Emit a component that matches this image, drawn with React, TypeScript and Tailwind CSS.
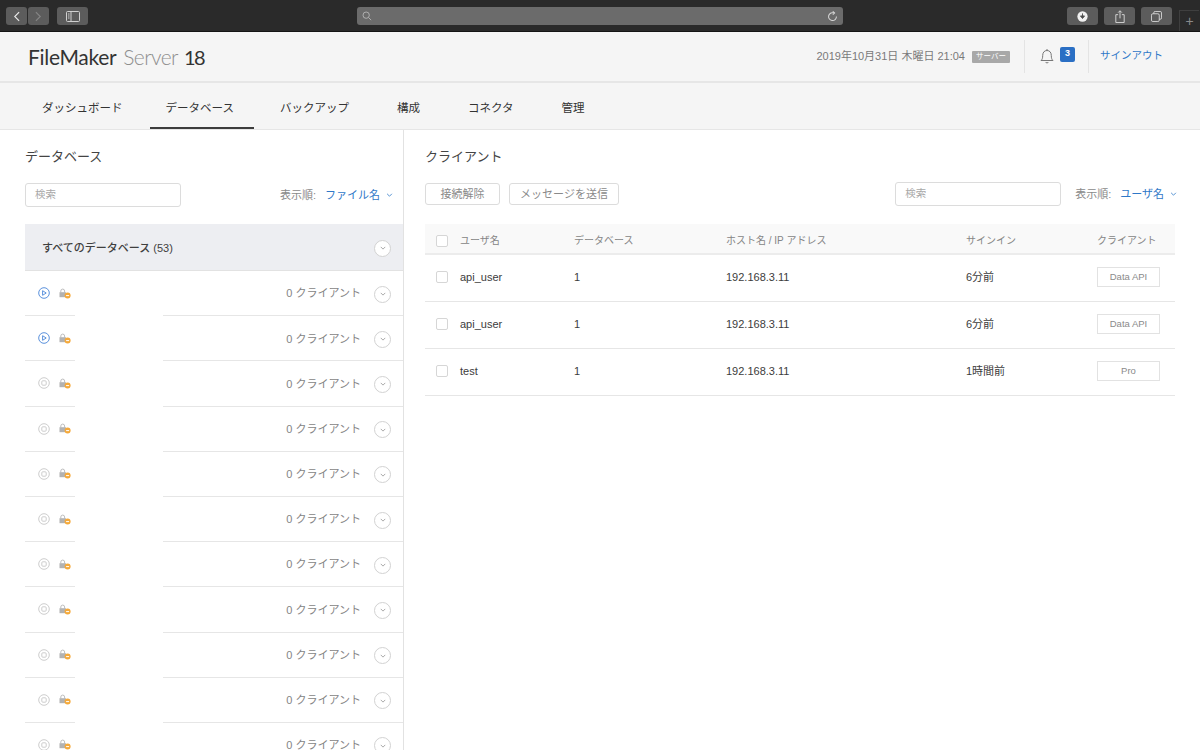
import React from "react";

const jp = "font-['Liberation_Sans','Noto_Sans_CJK_JP',sans-serif]";

function Chevron({ className = "" }: { className?: string }) {
  return (
    <svg viewBox="0 0 8 5" className={className} fill="none" stroke="currentColor" strokeWidth="1">
      <path d="M1 1l3 3 3-3" />
    </svg>
  );
}

function RoundChevron({ white = false }: { white?: boolean }) {
  return (
    <span className={`flex h-[17px] w-[17px] items-center justify-center rounded-full border border-[#d2d2d2] text-[#8c8c8c] ${white ? "bg-white" : ""}`}>
      <Chevron className="h-[4px] w-[6px]" />
    </span>
  );
}

function PlayIcon() {
  return (
    <svg viewBox="0 0 12 12" className="h-3 w-3" fill="none" stroke="#4a86d8" strokeWidth="0.9">
      <circle cx="6" cy="6" r="5.3" />
      <path d="M4.600 3.700v4.600l3.600-2.300z" />
    </svg>
  );
}

function StopIcon() {
  return (
    <svg viewBox="0 0 12 12" className="h-3 w-3" fill="none" stroke="#cdcdcd" strokeWidth="1">
      <circle cx="6" cy="6" r="5.3" />
      <rect x="3.800" y="3.800" width="4.400" height="4.400" rx="1" />
    </svg>
  );
}

function LockIcon() {
  return (
    <svg viewBox="0 0 12 11" className="h-[11px] w-[12px]">
      <path d="M1.800 4.500V3a1.900 1.900 0 0 1 3.800 0v1.500" fill="none" stroke="#bdbdbd" strokeWidth="1" />
      <rect x="0.500" y="4.200" width="6.400" height="5" fill="#b2b2b2" />
      <circle cx="8.600" cy="7.600" r="3" fill="#f5a93a" />
      <rect x="7.100" y="7.100" width="3" height="1" fill="#fff" />
    </svg>
  );
}

function DbRow({ playing }: { playing?: boolean }) {
  return (
    <div className="flex h-[45.2px] shrink-0">
      <div className="flex w-[50px] items-center gap-[9px] border-b border-[#e6e6e6] pl-[13px]">
        {playing ? <PlayIcon /> : <StopIcon />}
        <LockIcon />
      </div>
      <div className="w-[88px]" />
      <div className="flex flex-1 items-center justify-end border-b border-[#e6e6e6] pr-[12px] pt-[2px]">
        <span className="mb-[1px] mr-[13px] text-[11px] text-[#858585]">0 クライアント</span>
        <RoundChevron />
      </div>
    </div>
  );
}

function Badge({ label }: { label: string }) {
  return (
    <span className="flex h-[20px] w-[63px] items-center justify-center border border-[#e2e2e2] text-[9.5px] text-[#8a8a8a]">{label}</span>
  );
}

function Check() {
  return <span className="h-3 w-3 shrink-0 rounded-[2px] border border-[#d6d6d6] bg-white" />;
}

function ClientRow({ user, time, type }: { user: string; time: string; type: string }) {
  return (
    <div className="flex h-[47px] items-center border-b border-[#e6e6e6] pb-[2px] text-[11px] text-[#3c3c3c]">
      <div className="flex w-[149px] items-center gap-3 pl-[11px]">
        <Check />
        <span>{user}</span>
      </div>
      <div className="w-[152px]">1</div>
      <div className="w-[240px]">192.168.3.11</div>
      <div className="w-[131px]">{time}</div>
      <Badge label={type} />
    </div>
  );
}

function Search({ w }: { w: string }) {
  return (
    <div className={`flex h-6 items-center rounded-[3px] border border-[#dcdcdc] bg-white pl-[9px] text-[10.5px] text-[#a8a8a8] ${w}`}>検索</div>
  );
}

function Sort({ label }: { label: string }) {
  return (
    <div className="flex items-center text-[11px]">
      <span className="text-[#8a8a8a]">表示順:</span>
      <span className="ml-[9px] text-[#2f78c8]">{label}</span>
      <Chevron className="ml-[6px] h-[4px] w-[7px] text-[#2f78c8]" />
    </div>
  );
}

function ChromeBtn({ w, children }: { w: string; children?: React.ReactNode }) {
  return <div className={`flex h-[18px] items-center justify-center rounded-[3px] bg-[#5c5c5c] ${w}`}>{children}</div>;
}

export default function App() {
  return (
    <div className={`flex h-[750px] w-[1200px] flex-col overflow-hidden bg-white ${jp}`}>
      {/* browser chrome */}
      <div className="flex h-8 shrink-0 items-start border-b border-[#151515] bg-[#2a2a2a] pt-[7px]">
        <div className="ml-[6px] flex gap-[1px]">
          <ChromeBtn w="w-[21px]">
            <svg viewBox="0 0 8 12" className="h-[11px] w-[7px]" fill="none" stroke="#e8e8e8" strokeWidth="1.3"><path d="M7 1L2 6l5 5" /></svg>
          </ChromeBtn>
          <ChromeBtn w="w-[21px]">
            <svg viewBox="0 0 8 12" className="h-[11px] w-[7px]" fill="none" stroke="#858585" strokeWidth="1.3"><path d="M1 1l5 5-5 5" /></svg>
          </ChromeBtn>
        </div>
        <div className="ml-[8px]">
          <ChromeBtn w="w-[31px]">
            <svg viewBox="0 0 14 11" className="h-[11px] w-[14px]" fill="none" stroke="#d0d0d0" strokeWidth="1"><rect x="0.5" y="0.5" width="13" height="10" rx="1" /><path d="M5 1v9M2 3h1.500M2 5h1.500M2 7h1.500" /></svg>
          </ChromeBtn>
        </div>
        <div className="ml-[269px] flex h-[18px] w-[486px] items-center justify-between rounded-[3px] bg-[#6b6b6b] px-[5px]">
          <svg viewBox="0 0 12 12" className="h-[10px] w-[10px]" fill="none" stroke="#b5b5b5" strokeWidth="1.1"><circle cx="5" cy="5" r="3.800" /><path d="M8 8l3 3" /></svg>
          <svg viewBox="0 0 12 12" className="h-[11px] w-[11px]" fill="none" stroke="#d8d8d8" strokeWidth="1.1"><path d="M7.800 2.200A4.300 4.300 0 1 0 10.300 6" /><path d="M6.300 0.400l2 1.800-2 1.700" /></svg>
        </div>
        <div className="ml-[224px] flex gap-[6px]">
          <ChromeBtn w="w-[31px]">
            <svg viewBox="0 0 12 12" className="h-[11px] w-[11px]"><circle cx="6" cy="6" r="5.600" fill="#f0f0f0" /><path d="M6 2.600v4.400M3.800 5.400L6 8.200l2.200-2.800z" stroke="#4a4a4a" fill="#4a4a4a" strokeWidth="1" /></svg>
          </ChromeBtn>
          <ChromeBtn w="w-[31px]">
            <svg viewBox="0 0 10 14" className="h-[13px] w-[10px]" fill="none" stroke="#d8d8d8" strokeWidth="1"><path d="M3 5H.5v8.500h9V5H7M5 9V1M3 2.800L5 .8l2 2" /></svg>
          </ChromeBtn>
          <ChromeBtn w="w-[31px]">
            <svg viewBox="0 0 12 12" className="h-[11px] w-[11px]" fill="none" stroke="#d8d8d8" strokeWidth="1"><rect x="0.5" y="3" width="8.500" height="8.500" rx="1.500" /><path d="M3 3V2A1.500 1.500 0 0 1 4.500.5h5.500A1.500 1.500 0 0 1 11.500 2v5.500A1.500 1.500 0 0 1 10 9H9" /></svg>
          </ChromeBtn>
        </div>
        <div className="ml-[7px] mt-[3px] flex h-[21px] w-[20px] items-center justify-center border-l border-t border-[#3f3f3f] text-[14px] font-light leading-none text-[#8a8a8a]">+</div>
      </div>

      {/* app header */}
      <div className="flex h-[51px] shrink-0 items-center border-b-2 border-[#e6e6e6] bg-[#f5f5f5]">
        <div className="ml-[28px] flex items-baseline font-['Lato',sans-serif] text-[21px] leading-none tracking-[-0.3px] text-[#333333]">
          <span className="font-normal">FileMaker</span>
          <span className="ml-[7px] font-light tracking-[-0.6px] text-[#8e8e8e]">Server</span>
          <span className="ml-[6px] text-[20px] font-normal tracking-[-1.5px]">18</span>
        </div>
        <div className="ml-auto flex h-full items-center">
          <span className="text-[11px] text-[#7a7a7a]">2019年10月31日 木曜日 21:04</span>
          <span className="ml-[7px] flex h-[12px] w-[38px] items-center justify-center rounded-[1px] bg-[#a8a8a8] text-[7.5px] text-white">サーバー</span>
          <div className="ml-[14px] h-[33px] w-[1px] bg-[#e4e4e4]" />
          <svg viewBox="0 0 14 16" className="mb-[2px] ml-[15px] h-[16px] w-[14px]" fill="none" stroke="#777777" strokeWidth="1"><path d="M1 12.500c1.300-1.200 1.700-2.400 1.700-5C2.700 4.500 4.300 2.500 7 2.500s4.300 2 4.300 5c0 2.600.4 3.800 1.700 5zM5.500 14a1.700 1.700 0 0 0 3 0M7 2.500V1" /></svg>
          <span className="mb-[5px] ml-[6px] flex h-[15px] w-[15px] items-center justify-center rounded-[2px] bg-[#2a6fc4] text-[9px] font-bold text-white">3</span>
          <div className="ml-[13px] h-[33px] w-[1px] bg-[#e4e4e4]" />
          <span className="ml-[11px] mr-[37px] mb-[2px] text-[10.5px] text-[#2f78c8]">サインアウト</span>
        </div>
      </div>

      {/* nav */}
      <div className="flex h-[47px] shrink-0 items-stretch gap-4 border-b border-[#e6e6e6] bg-[#f5f5f5] pl-[26px] text-[11.5px] text-[#333333]">
        <div className="flex items-center border-b-2 border-transparent px-4 pt-2">ダッシュボード</div>
        <div className="-ml-[5px] -mr-[6px] flex items-center border-b-2 border-[#3c3c3c] pl-4 pr-5 pt-2">データベース</div>
        <div className="flex items-center border-b-2 border-transparent px-4 pt-2">バックアップ</div>
        <div className="flex items-center border-b-2 border-transparent px-4 pt-2">構成</div>
        <div className="flex items-center border-b-2 border-transparent px-4 pt-2">コネクタ</div>
        <div className="flex items-center border-b-2 border-transparent px-4 pt-2">管理</div>
      </div>

      {/* body */}
      <div className="flex min-h-0 flex-1">
        <div className="flex w-[404px] shrink-0 flex-col overflow-hidden border-r border-[#e2e2e2] pl-[25px]">
          <h2 className="mt-[18px] text-[13px] font-normal leading-[18px] text-[#444444]">データベース</h2>
          <div className="mt-[17px] flex items-center justify-between pr-[10px]">
            <Search w="w-[156px]" />
            <Sort label="ファイル名" />
          </div>
          <div className="mt-[17px] flex h-[47px] shrink-0 items-center justify-between border-b border-[#e2e2e2] bg-[#edeef2] pl-[17px] pr-[12px] pt-[2px]">
            <span className="text-[11px] font-medium text-[#3f3f3f]">すべてのデータベース (53)</span>
            <RoundChevron white />
          </div>
          {Array.from({ length: 11 }).map((_, i) => (
            <DbRow key={i} playing={i < 2} />
          ))}
        </div>

        <div className="min-w-0 flex-1 pl-[21px] pr-[25px]">
          <h2 className="mt-[18px] text-[13px] font-normal leading-[18px] text-[#444444]">クライアント</h2>
          <div className="mt-[16px] flex items-center">
            <button className="flex h-[22px] w-[75px] items-center justify-center rounded-[3px] border border-[#dcdcdc] text-[11px] text-[#8a8a8a]">接続解除</button>
            <button className="ml-[9px] flex h-[22px] w-[110px] items-center justify-center rounded-[3px] border border-[#dcdcdc] text-[11px] text-[#8a8a8a]">メッセージを送信</button>
            <div className="ml-auto mr-[14px]"><Search w="w-[166px]" /></div>
            <div className="-mr-[2px]"><Sort label="ユーザ名" /></div>
          </div>
          <div className="mt-[18px] flex h-[31px] items-center border-b-2 border-[#ececec] bg-[#f9f9f9] pt-[4px] text-[10px] text-[#858585]">
            <div className="flex w-[149px] items-center gap-3 pl-[11px]">
              <Check />
              <span>ユーザ名</span>
            </div>
            <div className="w-[152px]">データベース</div>
            <div className="w-[240px]">ホスト名 / IP アドレス</div>
            <div className="w-[131px]">サインイン</div>
            <div>クライアント</div>
          </div>
          <ClientRow user="api_user" time="6分前" type="Data API" />
          <ClientRow user="api_user" time="6分前" type="Data API" />
          <ClientRow user="test" time="1時間前" type="Pro" />
        </div>
      </div>
    </div>
  );
}
